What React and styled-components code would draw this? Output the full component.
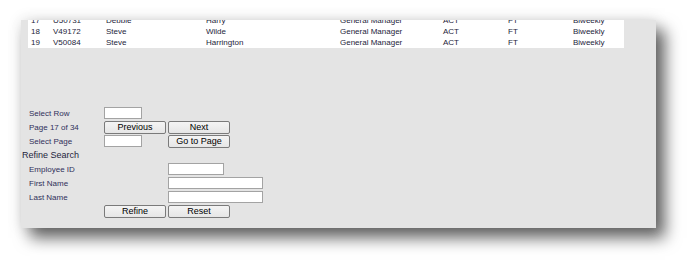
import styled, { createGlobalStyle } from 'styled-components'

const GlobalStyle = createGlobalStyle`
  html, body {
    margin: 0;
    padding: 0;
    background: #ffffff;
  }
  body {
    width: 698px;
    height: 270px;
    overflow: hidden;
    font-family: 'Liberation Sans', Arial, sans-serif;
  }
`

const Stage = styled.div`
  padding: 20px 0 0 21px;
`

const Panel = styled.div`
  width: 635px;
  height: 208px;
  background: #e4e4e4;
  overflow: hidden;
  box-shadow: 9px 10px 15px rgba(0, 0, 0, 0.6), 0 0 14px rgba(0, 0, 0, 0.12);
`

const Results = styled.div`
  margin: -5px 0 0 7px;
  width: 596px;
  background: #ffffff;
`

const Row = styled.div`
  display: grid;
  grid-template-columns: 22px 53px 100px 134px 103px 65px 65px 1fr;
  height: 11px;
  align-items: center;
`

const Cell = styled.span`
  padding-left: 3px;
  font-family: 'Liberation Sans', Arial, sans-serif;
  font-size: 8px;
  color: #1d1d3a;
  white-space: nowrap;
`

const Form = styled.div`
  margin: 58px 0 0 8px;
  display: grid;
  grid-template-columns: 75px 64px auto;
  grid-auto-rows: 14px;
  align-items: center;
`

const Label = styled.span`
  font-size: 8px;
  color: #30305a;
`

const Heading = styled.span`
  grid-column: 1 / -1;
  margin-left: -7px;
  font-size: 9px;
  color: #1e1e3c;
`

const Field = styled.input`
  box-sizing: border-box;
  width: ${(p) => p.$w}px;
  height: 12px;
  margin: 0;
  padding: 0;
  background: #ffffff;
  border: 1px solid #a3a3a3;
  grid-column: ${(p) => p.$col};
`

const Button = styled.button`
  box-sizing: border-box;
  width: 62px;
  height: 13px;
  margin: 0;
  padding: 0;
  background: linear-gradient(#f4f4f4, #e6e6e6);
  border: 1px solid #7a7a7a;
  border-radius: 2px;
  font-family: 'Liberation Sans', Arial, sans-serif;
  font-size: 9px;
  line-height: 11px;
  color: #000000;
  grid-column: ${(p) => p.$col || 'auto'};
`

const rows = [
  ['17', 'U50731', 'Debbie', 'Harry'],
  ['18', 'V49172', 'Steve', 'Wilde'],
  ['19', 'V50084', 'Steve', 'Harrington'],
]

const App = () => (
  <>
    <GlobalStyle />
    <Stage>
      <Panel>
        <Results>
          {rows.map(([n, id, first, last]) => (
            <Row key={n}>
              <Cell>{n}</Cell>
              <Cell>{id}</Cell>
              <Cell>{first}</Cell>
              <Cell>{last}</Cell>
              <Cell>General Manager</Cell>
              <Cell>ACT</Cell>
              <Cell>FT</Cell>
              <Cell>Biweekly</Cell>
            </Row>
          ))}
        </Results>
        <Form>
          <Label>Select Row</Label>
          <Field $w={38} $col="2 / 4" />

          <Label>Page 17 of 34</Label>
          <Button>Previous</Button>
          <Button>Next</Button>

          <Label>Select Page</Label>
          <Field $w={38} $col="2" />
          <Button>Go to Page</Button>

          <Heading>Refine Search</Heading>

          <Label>Employee ID</Label>
          <Field $w={56} $col="3" />

          <Label>First Name</Label>
          <Field $w={95} $col="3" />

          <Label>Last Name</Label>
          <Field $w={95} $col="3" />

          <Button $col="2">Refine</Button>
          <Button>Reset</Button>
        </Form>
      </Panel>
    </Stage>
  </>
)

export default App
